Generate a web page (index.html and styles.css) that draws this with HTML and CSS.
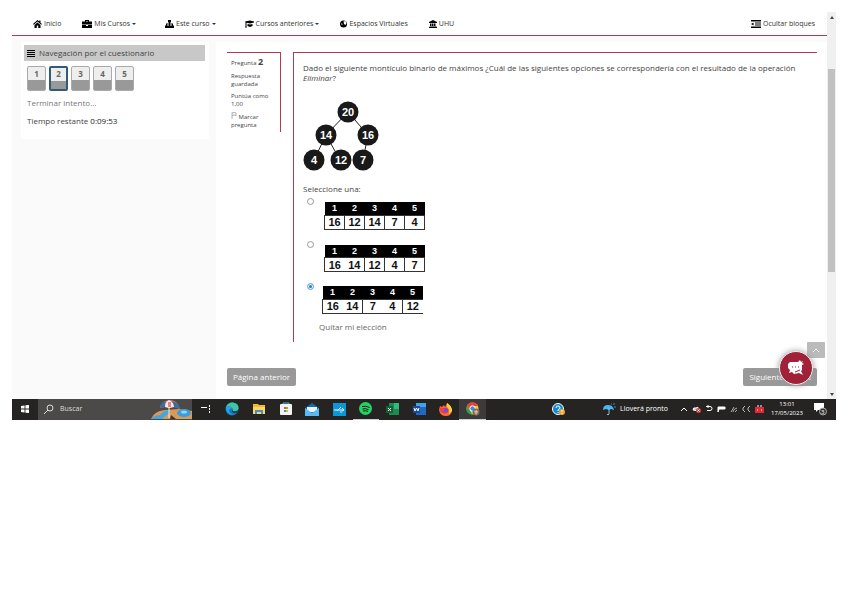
FILE: index.html
```html
<!DOCTYPE html>
<html lang="es">
<head>
    <meta charset="UTF-8">
    <meta name="viewport" content="width=device-width, initial-scale=1.0">
    <title>Cuestionario</title>
    <link rel="stylesheet" href="styles.css">
</head>
<body>
<div class="screen">
    <div class="browser">
        <div class="page">
            <nav class="navbar">
                <a href="#"><svg width="9" height="8" viewBox="0 0 18 16"><path d="M9 0 0 8l1.500 1.500L9 3l7.500 6.500L18 8l-3-2.700V1h-2.500v2zM3 10v6h4.500v-5h3v5H15v-6L9 4.800z"/></svg><span>Inicio</span></a>
                <a href="#" class="drop"><svg width="10" height="8" viewBox="0 0 20 16"><path d="M6 3V0h8v3h6v6H0V3zm2 0h4V2H8zM0 10h8v2h4v-2h8v6H0z"/></svg><span>Mis Cursos</span><i class="caret"></i></a>
                <a href="#" class="drop"><svg width="9" height="8" viewBox="0 0 18 16"><path d="M6 0h6v5h-2v2h6v4h2v5h-6v-5h2V9h-4v2h2v5H6v-5h2V9H4v2h2v5H0v-5h2V7h6V5H6z"/></svg><span>Este curso</span><i class="caret"></i></a>
                <a href="#"><svg width="9" height="8" viewBox="0 0 18 16"><path d="M0 3l10-2 8 2v2l-8 2-7-1.500V12l1 3H0l1-3V5zM5 8l5 1 5-1v4l-5 2-5-2z"/></svg><span>Cursos anteriores</span><i class="caret"></i></a>
                <a href="#"><svg width="7" height="8" viewBox="0 0 14 16"><circle cx="7" cy="8" r="7"/><path d="M7 3l4-1 2 4-2 4-3-2zM2 6l3 2-1 3z" fill="#fff"/></svg><span>Espacios Virtuales</span></a>
                <a href="#"><svg width="8" height="8" viewBox="0 0 16 16"><path d="M8 0l8 4v2H0V4zM2 7h3v5h1V7h3v5h1V7h3v5h2v1H1v-1h1zM0 14h16v2H0z"/></svg><span>UHU</span></a>
                <a href="#" class="hide-blocks"><svg width="10" height="8" viewBox="0 0 20 16"><path d="M0 0h20v3H0zM8 5h12v2H8zM8 9h12v2H8zM0 13h20v3H0zM0 8l5-3v6z"/></svg><span>Ocultar bloques</span></a>
            </nav>
            <div class="content">
                <aside class="sidebar">
                    <section class="block">
                        <h2><svg width="8" height="7" viewBox="0 0 8 7"><path d="M0 0h8v1H0zM0 2h8v1H0zM0 4h8v1H0zM0 6h8v1H0z"/></svg>Navegación por el cuestionario</h2>
                        <div class="quiz-nav">
                            <a href="#">1</a>
                            <a href="#" class="current">2</a>
                            <a href="#">3</a>
                            <a href="#">4</a>
                            <a href="#">5</a>
                        </div>
                        <a href="#" class="finish">Terminar intento...</a>
                        <p class="timer">Tiempo restante <span>0:09:53</span></p>
                    </section>
                </aside>
                <main class="main">
                    <div class="question">
                        <div class="info">
                            <p class="number">Pregunta <b>2</b></p>
                            <p>Respuesta guardada</p>
                            <p>Puntúa como 1,00</p>
                            <a href="#"><svg width="6" height="7" viewBox="0 0 12 14" fill="none" stroke="#666"><path d="M2 14V1M2 2q4-2 8 0v5q-4-2-8 0"/></svg> Marcar pregunta</a>
                        </div>
                        <div class="formulation">
                            <p class="qtext">Dado el siguiente montículo binario de máximos ¿Cuál de las siguientes opciones se correspondería con el resultado de la operación <em>Eliminar</em>?</p>
                            <svg class="heap" width="77" height="72" viewBox="303 101 77 72">
                                <path d="M348 112 326 135 314 160M326 135l14 25M348 112l20 23-5 25" fill="none" stroke="#222"/>
                                <g fill="#191919">
                                    <circle cx="348" cy="112" r="10.500"/>
                                    <circle cx="326" cy="135" r="10.500"/>
                                    <circle cx="368" cy="135" r="10.500"/>
                                    <circle cx="314" cy="160" r="10.500"/>
                                    <circle cx="341" cy="160" r="10.500"/>
                                    <circle cx="363" cy="160" r="10.500"/>
                                </g>
                                <g class="heap-labels">
                                    <text x="348" y="116">20</text>
                                    <text x="326" y="139">14</text>
                                    <text x="368" y="139">16</text>
                                    <text x="314" y="164">4</text>
                                    <text x="341" y="164">12</text>
                                    <text x="363" y="164">7</text>
                                </g>
                            </svg>
                            <fieldset class="answers">
                                <legend>Seleccione una:</legend>
                                <div class="answer">
                                    <input type="radio" name="q2" id="q2a">
                                    <label for="q2a">
                                        <table>
                                            <tr><th>1</th><th>2</th><th>3</th><th>4</th><th>5</th></tr>
                                            <tr><td>16</td><td>12</td><td>14</td><td>7</td><td>4</td></tr>
                                        </table>
                                    </label>
                                </div>
                                <div class="answer">
                                    <input type="radio" name="q2" id="q2b">
                                    <label for="q2b">
                                        <table>
                                            <tr><th>1</th><th>2</th><th>3</th><th>4</th><th>5</th></tr>
                                            <tr><td class="open">16</td><td>14</td><td>12</td><td>4</td><td>7</td></tr>
                                        </table>
                                    </label>
                                </div>
                                <div class="answer last">
                                    <input type="radio" name="q2" id="q2c" checked>
                                    <label for="q2c">
                                        <table>
                                            <tr><th>1</th><th>2</th><th>3</th><th>4</th><th>5</th></tr>
                                            <tr><td class="open">16</td><td>14</td><td class="open">7</td><td>4</td><td class="open">12</td></tr>
                                        </table>
                                    </label>
                                </div>
                            </fieldset>
                            <a href="#" class="clear">Quitar mi elección</a>
                        </div>
                    </div>
                    <div class="pager">
                        <button type="button">Página anterior</button>
                        <button type="button" class="next">Siguiente página</button>
                    </div>
                </main>
            </div>
            <button type="button" class="to-top" aria-label="Subir"><svg width="6" height="4" viewBox="0 0 6 4" fill="none" stroke="#fff"><path d="M0 4l3-3 3 3"/></svg></button>
            <button type="button" class="chat" aria-label="Chat"><svg width="18" height="18" viewBox="0 0 18 18" fill="#fff"><path d="M3 3h8l2-2 1 2 2-1-1 2 2 1-2 1v5l-1 1 2 4-4-2-5 1-2-2-3 1 1-3-2-2V5z"/><path d="M5 8h1M8 8h1M11 8h1M8 13l5-2" stroke="#a12238"/></svg></button>
        </div>
        <div class="scrollbar">
            <svg width="4" height="3" viewBox="0 0 4 3"><path d="M0 3l2-3 2 3z" fill="#444"/></svg>
            <div class="track"><div class="thumb"></div></div>
            <svg width="4" height="3" viewBox="0 0 4 3"><path d="M0 0h4L2 3z" fill="#444"/></svg>
        </div>
    </div>

    <footer class="taskbar">
        <button type="button" class="start" aria-label="Inicio"><svg width="8" height="8" viewBox="0 0 9 9" fill="#fff"><path d="M0 1l4-.5V4H0zM5 .3 9 0v4H5zM0 5h4v3.500L0 8zM5 5h4v4l-4-.4z"/></svg></button>
        <div class="search">
            <svg width="10" height="10" viewBox="0 0 10 10" fill="none" stroke="#ddd"><circle cx="6" cy="4" r="3"/><path d="M4 6 0 10"/></svg>
            <input type="text" placeholder="Buscar" aria-label="Buscar">
            <svg width="41" height="20" viewBox="0 0 41 20">
                <path d="M0 20q3-8 14-9l14-1 13 2v8z" fill="#d99a55"/>
                <path d="M0 20q4-4 9-4 3-4 9-5l1 3q-6 3-7 6z" fill="#45a5df"/>
                <path d="M18 5v14" stroke="#eee"/>
                <path d="M9 9q1-7 9-8 9 0 11 9l-6-2-5 1-4-1z" fill="#e9705c"/>
                <path d="M14 8q0-5 4-7 5 2 5 7l-5 1z" fill="#e8eef5"/>
                <path d="M9 9q0-6 6-7-2 3-1 6zM23 8q0-4-3-6 8 1 9 8z" fill="#3a6d9e"/>
                <path d="M17 3h3v5h-3z" fill="#ed8270"/>
                <ellipse cx="33" cy="14" rx="7" ry="4" fill="#3c9ddd"/><ellipse cx="33" cy="13" rx="3" ry="1.500" fill="#9bd3f3"/>
                <path d="M19 20l1-4 5 4z" fill="#3f3630"/>
            </svg>
        </div>
        <button type="button" class="taskview" aria-label="Vista de tareas"><svg width="10" height="10" viewBox="0 0 10 10" stroke="#fff" fill="none"><path d="M0 3.500h6M8.500 1v2M8.500 4v2M8.500 7v2"/></svg></button>
        <div class="apps">
            <span><svg width="14" height="14" viewBox="0 0 14 14"><circle cx="7" cy="7" r="6.500" fill="#1678c7"/><path d="M1 5q2-5 7-4.500 6 1 5.500 6Q13 9 9 9q-2 0-1-2-2-4-7-2z" fill="#3dc6a0"/><path d="M1 5q5-2 7 2-2-2-4 1 0 4 5 5-8 0-8-8z" fill="#27a8dc"/><path d="M8 7q-1 2 1 2.500 2 .5 4-1l-1 2q-4 1-5-1z" fill="#262321"/></svg></span>
            <span><svg width="12" height="12" viewBox="0 0 12 12"><path d="M0 1h5l1 1h6v9H0z" fill="#f4b92c"/><path d="M0 4h12v7H0z" fill="#ffd660"/><path d="M2 7h8v4H8V9H4v2H2z" fill="#3a91d4"/></svg></span>
            <span><svg width="12" height="14" viewBox="0 0 12 14"><path d="M3 3V1h6v2" fill="none" stroke="#53b8df"/><rect y="2" width="12" height="11" rx="1" fill="#f4f4f4"/><path d="M4 5h2v2H4z" fill="#ed5335"/><path d="M6 5h2v2H6z" fill="#80b83b"/><path d="M4 8h2v2H4z" fill="#2b9fdb"/><path d="M6 8h2v2H6z" fill="#f4b52b"/></svg></span>
            <span><svg width="14" height="13" viewBox="0 0 14 13"><path d="M0 5l7-5 7 5v8H0z" fill="#1769ae"/><path d="M2 4h10v5H2z" fill="#e9f5fc"/><path d="M0 5l7 5 7-5v8H0z" fill="#58baf0"/></svg></span>
            <span><svg width="13" height="13" viewBox="0 0 13 13"><path d="M0 0h13v13H0z" fill="#0b98d8"/><path d="M1 7h10M9 5l2 2-2 1M4 8l4-4M7 9h2" fill="none" stroke="#e5f5fc"/></svg></span>
            <span class="open"><svg width="13" height="13" viewBox="0 0 13 13"><circle cx="6.500" cy="6.500" r="6.500" fill="#21d565"/><path d="M3 4.500q4-1 7.500 1M3.500 7q3-1 6 .7M4 9q3-.7 5 .5" fill="none" stroke="#191919"/></svg></span>
            <span><svg width="13" height="12" viewBox="0 0 13 12"><path d="M3 0h10v12H3z" fill="#1d8a50"/><path d="M8 0h5v6H8z" fill="#34bd78"/><path d="M0 3h7v7H0z" fill="#126236"/><path d="M2 5l3 3M5 5 2 8" stroke="#fff"/></svg></span>
            <span><svg width="13" height="12" viewBox="0 0 13 12"><path d="M3 0h10v12H3z" fill="#2368c5"/><path d="M3 0h10v4H3z" fill="#43a3ea"/><path d="M0 3h7v7H0z" fill="#164b9e"/><path d="M1 5l1 3 1.500-3L5 8l1-3" fill="none" stroke="#fff"/></svg></span>
            <span><svg width="13" height="13" viewBox="0 0 13 13"><path d="M1 3l2 1 2-2 1 2 2-4q5 3 5 8-1 5-6 5-6 0-7-6z" fill="#ff6b2b"/><path d="M8 0q5 3 5 8l-3 3q1-5-2-7z" fill="#ffd43c"/><circle cx="6.500" cy="7.500" r="2.800" fill="#7c4bd0"/><path d="M1 5q2-1 5 1l-2 2q2 2 5 1-4 4-8-1z" fill="#f33c4c"/></svg></span>
            <span class="open active"><svg width="14" height="14" viewBox="0 0 14 14"><circle cx="6.500" cy="6.500" r="6" fill="#f6c62f"/><path d="M1 4q2-4 6-4 4 1 5.500 4H7L4 8z" fill="#e64436"/><path d="M1 4l4 6 1 2.500Q0 12 .5 6z" fill="#29a152"/><circle cx="6.500" cy="6.500" r="2.700" fill="#4189ec" stroke="#fff"/><circle cx="10" cy="10" r="3.500" fill="#806c5b"/><path d="M8 9l3-1 1 2-2 3z" fill="#c9b7a5"/></svg></span>
        </div>
        <span class="help"><svg width="13" height="13" viewBox="0 0 13 13"><circle cx="6" cy="6" r="5.500" fill="#1688c6" stroke="#fff"/><path d="M4 5q0-2 2-2t2 2q0 1-2 2v1M6 9v1" fill="none" stroke="#fff"/><circle cx="10" cy="9" r="3" fill="#eea72a"/><path d="M10 7v2M10 10v1" stroke="#fff"/></svg></span>
        <a href="#" class="weather"><svg width="13" height="13" viewBox="0 0 13 13"><path d="M0 7q0-5 5-5t6 5L8 6 6 7 3 6z" fill="#4eb4ee"/><path d="M6 5v6q-1 2-2 0" fill="none" stroke="#8bbfe0"/><path d="M8 1h1M11 0v2M11 4h2" stroke="#3689c8"/></svg><span>Lloverá pronto</span></a>
        <div class="tray">
            <svg width="8" height="8" viewBox="0 0 8 8"><path d="M1 6l3-3 3 3"/></svg>
            <svg width="9" height="8" viewBox="0 0 9 8"><path d="M1 5q0-3 3-2 2-2 3 1v2z" fill="#bbb"/><circle cx="6.500" cy="5.500" r="2.500" fill="#e13b42" stroke="none"/><path d="M5.500 4.500l2 2M7.500 4.500l-2 2"/></svg>
            <svg width="8" height="8" viewBox="0 0 8 8"><path d="M1 1.500h4q2 0 2 2t-2 2H2M3 0v3"/></svg>
            <svg width="9" height="8" viewBox="0 0 9 8"><path d="M1 7V2h7v2H2z" fill="#fff"/></svg>
            <svg width="8" height="8" viewBox="0 0 8 8"><path d="M1 7l3-5M3 7q0-3 4-4M5 7l2-2" stroke="#aaa"/></svg>
            <svg width="9" height="8" viewBox="0 0 9 8"><path d="M3 1 1 3v2l2 2M8 1 6 3v2l2 2" stroke="#bbb"/></svg>
            <svg width="9" height="8" viewBox="0 0 9 8"><rect y="2" width="9" height="6" fill="#e32638" stroke="none"/><path d="M2 1h2M5 1h2M2 5h1M6 5h1"/></svg>
        </div>
        <div class="clock"><span>13:01</span><span>17/05/2023</span></div>
        <span class="notif"><svg width="14" height="14" viewBox="0 0 14 14"><path d="M1 1h10v7H5l-2 2V8H1z" fill="#fff"/><circle cx="10" cy="9.500" r="3.500" fill="#333" stroke="#aaa"/></svg><small>3</small></span>
    </footer>
</div>
</body>
</html>
```
FILE: styles.css
```css
* {
    box-sizing: border-box;
}
body {
    margin: 0;
    padding: 12px;
    background: #fff;
    color: #444;
    font-family: "Open Sans", "Noto Sans", sans-serif;
    font-size: 8px;
    line-height: 10px;
}
a {
    color: inherit;
    text-decoration: none;
}
p {
    margin: 0;
}
svg {
    display: block;
    flex: none;
}
button {
    border: 0;
    padding: 0;
    font: inherit;
}

/* browser viewport */
.browser {
    display: flex;
}
.page {
    flex: 1;
    position: relative;
}
.navbar {
    display: flex;
    align-items: center;
    gap: 21px;
    height: 24px;
    padding: 0 12px 0 21px;
    border-bottom: 1px solid #b8384f;
    font-size: 7px;
}
.navbar a {
    display: flex;
    align-items: center;
    gap: 2px;
    white-space: nowrap;
    color: #333;
}
.navbar .drop {
    margin-right: 8px;
}
.navbar .hide-blocks {
    margin-left: auto;
}
.caret {
    border: 2px solid transparent;
    border-top-color: #333;
    border-bottom: 0;
}
.content {
    display: flex;
    padding-top: 6px;
    background: #fafafa;
}

/* left block */
.sidebar {
    width: 204px;
    padding: 0 7px 0 9px;
}
.block {
    padding: 3px 4px 13px 3px;
    background: #fff;
}
.block h2 {
    display: flex;
    align-items: center;
    gap: 4px;
    height: 16px;
    margin: 0 0 5px;
    padding-left: 3px;
    background: #c8c8c8;
    font-size: 8px;
    font-weight: normal;
}
.quiz-nav {
    display: flex;
    gap: 3px;
    margin: 0 3px 7px;
}
.quiz-nav a {
    width: 19px;
    height: 25px;
    border: 1px solid #aaa;
    border-radius: 2px;
    background: linear-gradient(#eee 13px, #999 13px);
    font-weight: bold;
    line-height: 14px;
    text-align: center;
    color: #666;
}
.quiz-nav .current {
    border: 2px solid #315b76;
    line-height: 12px;
}
.finish {
    display: block;
    margin: 0 3px 8px;
    color: #777;
}
.timer {
    margin: 0 3px;
}
.timer span {
    color: #222;
}

/* question */
.main {
    flex: 1;
    padding: 10px 10px 13px 11px;
    background: #fff;
}
.question {
    display: flex;
    align-items: flex-start;
    gap: 12px;
}
.info {
    width: 54px;
    height: 80px;
    padding: 4px;
    border: solid #b8384f;
    border-width: 1px 1px 0 0;
    font-size: 6px;
    line-height: 8px;
}
.info p {
    margin-bottom: 4px;
}
.info .number {
    line-height: 10px;
}
.number b {
    font-size: 9px;
}
.info svg {
    display: inline;
}
.formulation {
    flex: 1;
    padding: 10px 9px;
    border: solid #b8384f;
    border-width: 1px 0 0 1px;
}
.heap {
    margin: 18px 0 11px;
}
.heap-labels {
    fill: #fff;
    font: bold 11px "Liberation Sans", Arial, sans-serif;
    text-anchor: middle;
}
.answers {
    margin: 0;
    padding: 0;
    border: 0;
}
.answers legend {
    padding: 0;
}
.answer {
    display: flex;
    align-items: flex-start;
    gap: 10px;
    padding: 4px 0 0 4px;
    margin-bottom: 7px;
}
.answer.last {
    gap: 8px;
    margin-bottom: 8px;
}
.answer input {
    appearance: none;
    width: 7px;
    height: 7px;
    margin: 0;
    border: 1px solid #999;
    border-radius: 50%;
}
.answer input:checked {
    border-color: #7ab4ff;
    background: #0d75ee;
    box-shadow: inset 0 0 0 1px #fff;
}
.answer label {
    padding-top: 4px;
}
.answer.last label {
    padding-top: 3px;
}
.answer table {
    border-collapse: collapse;
    font-family: "Liberation Sans", Arial, sans-serif;
    font-weight: bold;
    color: #111;
    text-align: center;
}
.answer th,
.answer td {
    width: 20px;
    padding: 0;
}
.answer th {
    height: 13px;
    background: #000;
    color: #fff;
    font-size: 9px;
}
.answer td {
    height: 14px;
    border: 1px solid #333;
    font-size: 11px;
}
.answer td.open {
    border-right: 0;
}
.answer td.open + td {
    border-left: 0;
}
.clear {
    padding-left: 16px;
    color: #666;
}
.pager {
    display: flex;
    justify-content: space-between;
    margin-top: 26px;
}
.pager button {
    height: 18px;
    padding: 0 6px;
    border-radius: 2px;
    background: #999;
    color: #fff;
}
.to-top {
    position: absolute;
    right: 2px;
    bottom: 41px;
    display: grid;
    place-items: center;
    width: 18px;
    height: 16px;
    border-radius: 1px;
    background: #bbb;
}
.chat {
    position: absolute;
    right: 14px;
    bottom: 14px;
    display: grid;
    place-items: center;
    width: 34px;
    height: 34px;
    border: 1px solid #eee;
    border-radius: 50%;
    background: #a12238;
    box-shadow: 0 0 6px #999;
}
.scrollbar {
    display: flex;
    flex-direction: column;
    align-items: center;
    width: 9px;
    padding: 4px 0 3px;
    background: #f0f0f0;
}
.track {
    flex: 1;
    padding-top: 50px;
}
.thumb {
    width: 7px;
    height: 203px;
    background: #c1c1c1;
}

/* windows taskbar */
.taskbar {
    display: flex;
    align-items: center;
    height: 21px;
    background: #262423;
    color: #fff;
    font-size: 7px;
}
.start {
    display: grid;
    place-items: center;
    width: 26px;
    background: none;
}
.search {
    display: flex;
    align-items: center;
    gap: 6px;
    width: 154px;
    height: 21px;
    padding-left: 6px;
    background: #4c4a48;
}
.search input {
    flex: 1;
    min-width: 0;
    padding: 0;
    border: 0;
    background: none;
    font: inherit;
}
.search input::placeholder {
    color: #ddd;
}
.taskview {
    display: grid;
    place-items: center;
    width: 27px;
    background: none;
}
.apps {
    display: flex;
    width: 267px;
}
.apps span {
    flex: 1;
    display: grid;
    place-items: center;
    height: 21px;
}
.apps .open {
    border-bottom: 1px solid #ccc;
}
.apps .active {
    background: #3d3b3a;
}
.help {
    margin-left: 66px;
}
.weather {
    display: flex;
    align-items: center;
    gap: 4px;
    margin-left: auto;
    white-space: nowrap;
}
.tray {
    display: flex;
    gap: 4px;
    margin-left: 12px;
    fill: none;
    stroke: #fff;
}
.clock {
    display: flex;
    flex-direction: column;
    align-items: center;
    width: 46px;
    font-size: 6px;
    line-height: 9px;
}
.notif {
    position: relative;
    margin: 0 9px 0 3px;
}
.notif small {
    position: absolute;
    left: 8px;
    top: 5px;
    font-size: 6px;
}
```
